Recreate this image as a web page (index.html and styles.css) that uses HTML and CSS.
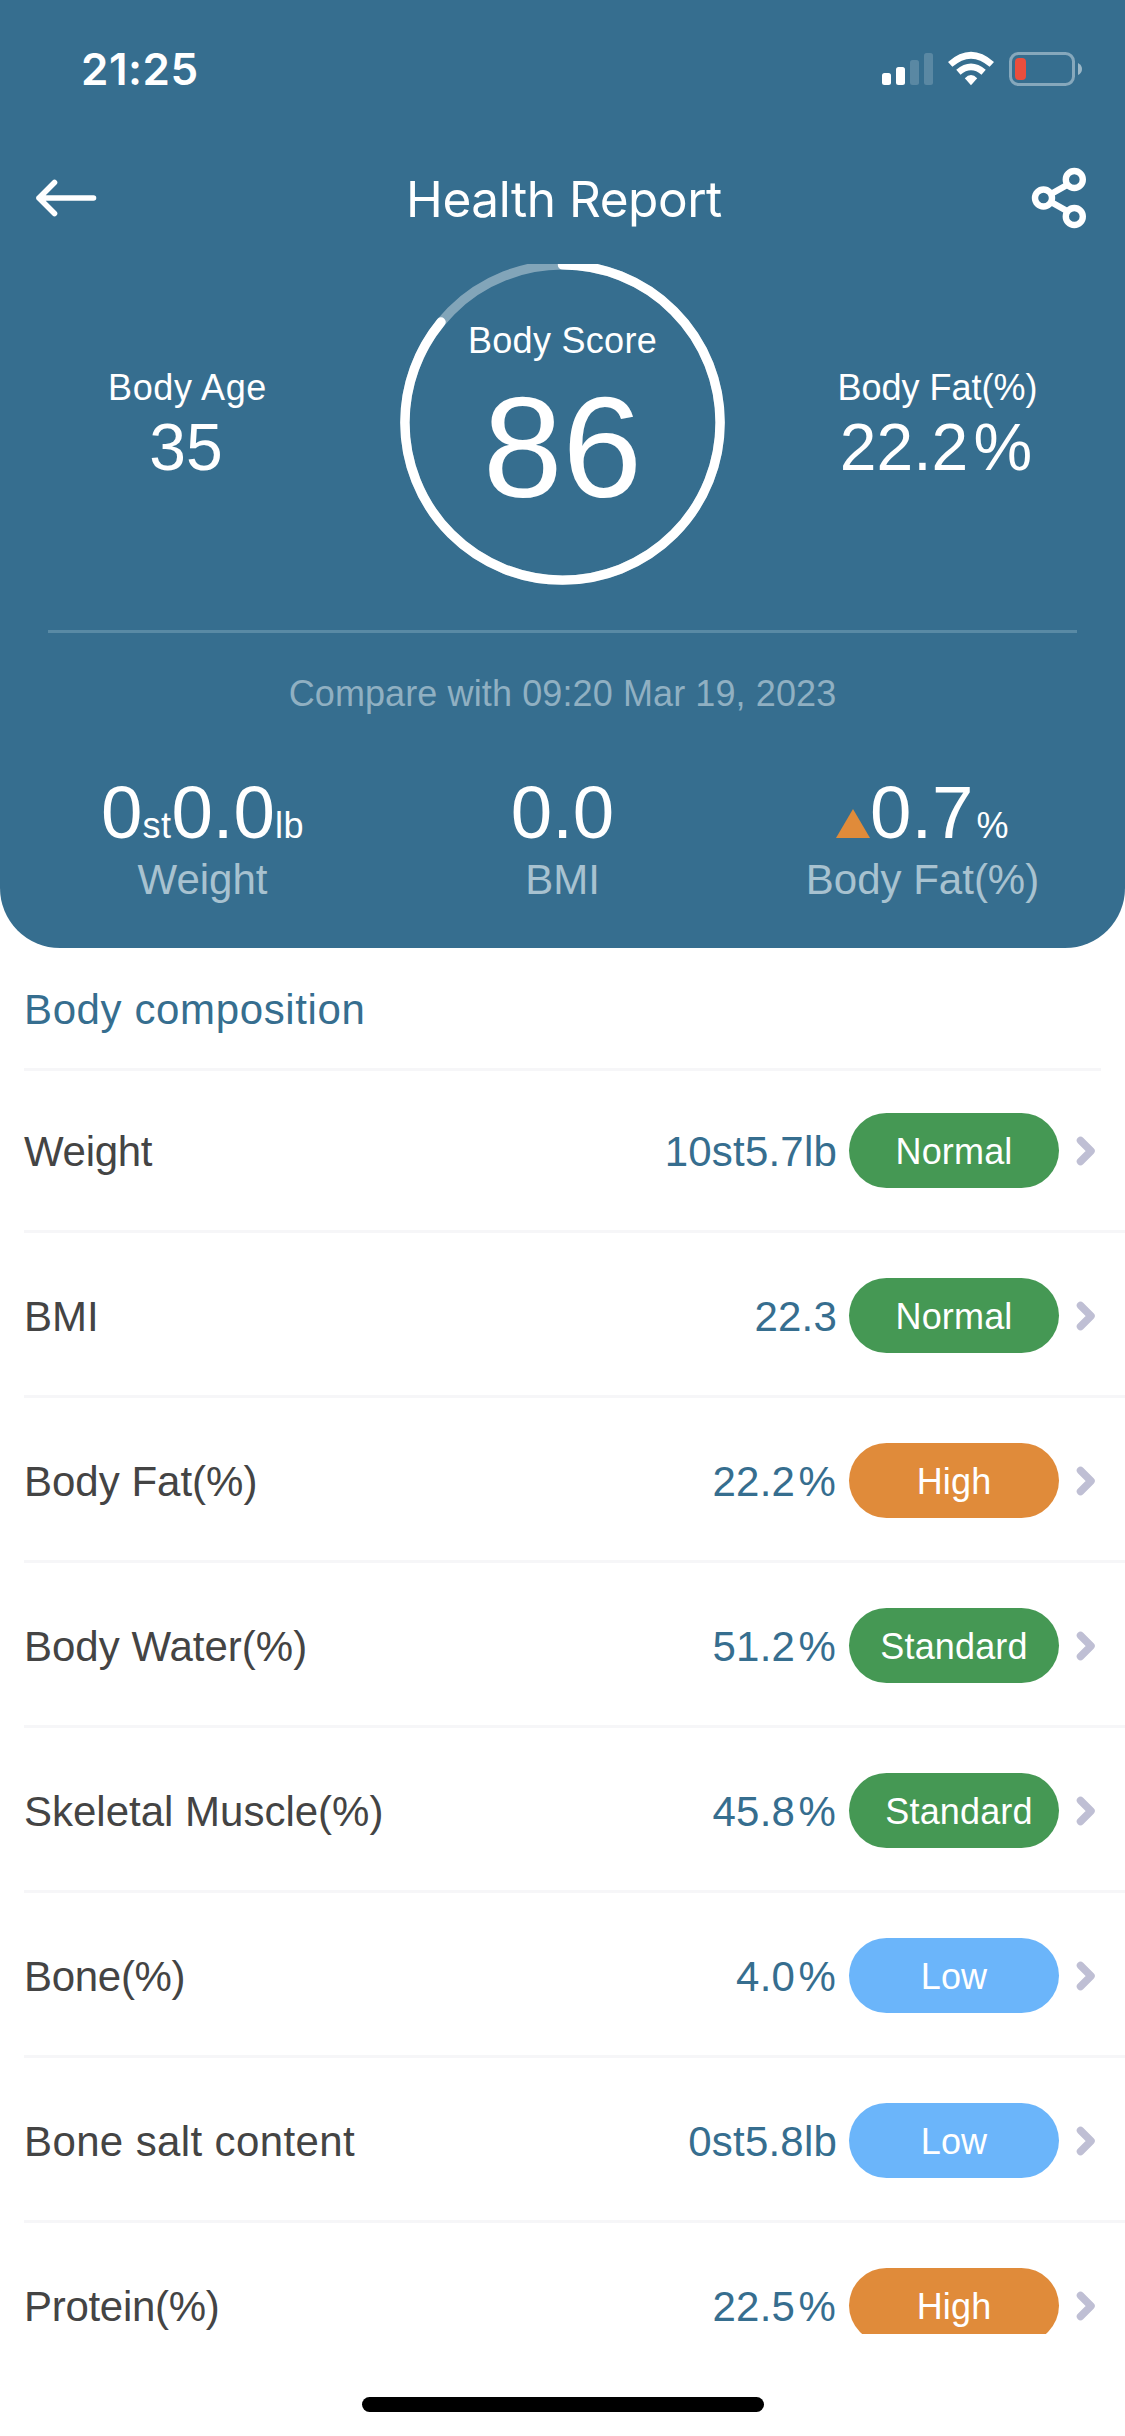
FILE: index.html
```html
<!DOCTYPE html>
<html lang="en">
<head>
<meta charset="utf-8">
<title>Health Report</title>
<link rel="stylesheet" href="styles.css">
</head>
<body>
<div class="screen">
  <header class="top">
    <div class="status">
      <span class="time">21:25</span>
      <svg class="status-icons" width="202" height="36" viewBox="881 51 202 36">
        <g fill="#fff">
          <rect x="882" y="73" width="9" height="12" rx="2.5"/>
          <rect x="896" y="67" width="9" height="18" rx="2.5"/>
          <rect x="910" y="60" width="9" height="25" rx="2.5" opacity=".18"/>
          <rect x="924" y="53" width="9" height="32" rx="2.5" opacity=".18"/>
        </g>
        <path d="M971 85.200L964.800 78.300Q971 71.800 977.200 78.300Z" fill="#fff"/>
        <g fill="none" stroke="#fff" stroke-width="6.600">
          <path d="M950.200 64.400Q971 46 991.800 64.400"/>
          <path d="M958.400 72.300Q971 61.500 983.600 72.300"/>
        </g>
        <rect x="1010.500" y="53.500" width="63" height="31" rx="8" fill="none" stroke="#fff" stroke-opacity=".4" stroke-width="3"/>
        <path d="M1078 63q4 2 4 6t-4 6z" fill="#fff" opacity=".5"/>
        <rect x="1015" y="58" width="11" height="22" rx="4" fill="#eb4e3d"/>
      </svg>
    </div>
    <nav class="nav">
      <svg width="62" height="40" viewBox="35 178 62 40" fill="none" stroke="#fff" stroke-width="5.600" stroke-linecap="round" stroke-linejoin="round">
        <path d="M39 198H93.500M54.500 182.500L39 198L54.500 213.500"/>
      </svg>
      <h1 class="title">Health Report</h1>
      <svg width="56" height="62" viewBox="1031 167 56 62" fill="none" stroke="#fff" stroke-width="6.400">
        <circle cx="1074.300" cy="179.500" r="8.500"/><circle cx="1043.500" cy="198" r="8.500"/><circle cx="1074.300" cy="216.500" r="8.500"/>
        <path d="M1051 194L1067 185M1051 202L1067 211"/>
      </svg>
    </nav>
    <section class="summary">
      <div class="metric"><span class="metric-name age">Body Age</span><span class="metric-value">35</span></div>
      <div class="score">
        <svg class="ring" width="325" height="325" viewBox="0 0 325 325" fill="none" stroke="#fff" stroke-width="9.400">
          <circle cx="162.500" cy="162.500" r="157.600" stroke-opacity=".38"/>
          <circle cx="162.500" cy="162.500" r="157.600" pathLength="100" stroke-dasharray="86 100" stroke-linecap="round" transform="rotate(-90 162.500 162.500)"/>
        </svg>
        <span class="score-name">Body Score</span>
        <span class="score-value">86</span>
      </div>
      <div class="metric"><span class="metric-name">Body Fat(%)</span><span class="metric-value">22.2<span class="sign">%</span></span></div>
    </section>
    <section class="compare">
      <p class="compare-title">Compare with 09:20 Mar 19, 2023</p>
      <div class="changes">
        <div class="change"><div class="change-value">0<small>st</small>0.0<small>lb</small></div><div class="change-name">Weight</div></div>
        <div class="change"><div class="change-value">0.0</div><div class="change-name">BMI</div></div>
        <div class="change"><div class="change-value"><svg class="up" width="34" height="29" viewBox="0 0 34 29"><path d="M17 0L34 29H0Z" fill="#e08b3a"/></svg>0.7<small class="percent">%</small></div><div class="change-name">Body Fat(%)</div></div>
      </div>
    </section>
  </header>
  <main class="list">
    <h2 class="heading">Body composition</h2>
    <div class="row first"><span class="name tight">Weight</span><span class="value">10st5.7lb</span><span class="pill green">Normal</span><svg class="chevron" width="20" height="30" viewBox="0 0 20 30"><path d="M4.500 4.500L15 15L4.500 25.500"/></svg></div>
    <div class="row"><span class="name">BMI</span><span class="value">22.3</span><span class="pill green">Normal</span><svg class="chevron" width="20" height="30" viewBox="0 0 20 30"><path d="M4.500 4.500L15 15L4.500 25.500"/></svg></div>
    <div class="row"><span class="name">Body Fat(%)</span><span class="value pct">22.2<span class="sign">%</span></span><span class="pill orange">High</span><svg class="chevron" width="20" height="30" viewBox="0 0 20 30"><path d="M4.500 4.500L15 15L4.500 25.500"/></svg></div>
    <div class="row"><span class="name">Body Water(%)</span><span class="value pct">51.2<span class="sign">%</span></span><span class="pill green">Standard</span><svg class="chevron" width="20" height="30" viewBox="0 0 20 30"><path d="M4.500 4.500L15 15L4.500 25.500"/></svg></div>
    <div class="row"><span class="name">Skeletal Muscle(%)</span><span class="value pct">45.8<span class="sign">%</span></span><span class="pill green shifted">Standard</span><svg class="chevron" width="20" height="30" viewBox="0 0 20 30"><path d="M4.500 4.500L15 15L4.500 25.500"/></svg></div>
    <div class="row"><span class="name tight">Bone(%)</span><span class="value pct">4.0<span class="sign">%</span></span><span class="pill blue">Low</span><svg class="chevron" width="20" height="30" viewBox="0 0 20 30"><path d="M4.500 4.500L15 15L4.500 25.500"/></svg></div>
    <div class="row"><span class="name wide">Bone salt content</span><span class="value">0st5.8lb</span><span class="pill blue">Low</span><svg class="chevron" width="20" height="30" viewBox="0 0 20 30"><path d="M4.500 4.500L15 15L4.500 25.500"/></svg></div>
    <div class="row"><span class="name tight">Protein(%)</span><span class="value pct">22.5<span class="sign">%</span></span><span class="pill orange">High</span><svg class="chevron" width="20" height="30" viewBox="0 0 20 30"><path d="M4.500 4.500L15 15L4.500 25.500"/></svg></div>
  </main>
  <footer class="bottom"><div class="home-bar"></div></footer>
</div>
</body>
</html>
```
FILE: styles.css
```css
* { box-sizing: border-box; margin: 0; padding: 0; }
body { font-family: "Liberation Sans", Arial, sans-serif; background: #fff; }
svg { display: block; flex: none; }
h1, h2 { font-weight: 400; }
.screen { width: 1125px; height: 2436px; overflow: hidden; display: flex; flex-direction: column; }

.top { height: 948px; flex: none; background: #366e8f; color: #fff; border-radius: 0 0 60px 60px; }
.status { height: 138px; display: flex; justify-content: space-between; align-items: center; padding: 0 42px 0 81px; }
.time { font: 600 44px/60px Inter, sans-serif; letter-spacing: 0.5px; }
.nav { height: 126px; display: flex; justify-content: space-between; align-items: center; padding: 0 38px 6px 35px; }
.title { padding-top: 2px; font: 400 49.500px/60px Inter, sans-serif; letter-spacing: -0.45px; }

.summary { height: 366px; display: grid; grid-template-columns: 375px 375px 375px; justify-items: center; overflow: hidden; }
.metric { padding-top: 101px; display: flex; flex-direction: column; align-items: center; gap: 6px; }
.metric-name, .score-name { font-size: 36px; line-height: 46px; }
.metric-name.age { letter-spacing: 0.6px; }
.score-name { letter-spacing: 0.3px; }
.metric-value { margin-left: -3px; font-size: 66px; line-height: 60px; }
.sign { margin-left: 0.08em; }
.score { position: relative; width: 325px; height: 325px; margin-top: -4px; padding-top: 58px; display: flex; flex-direction: column; align-items: center; gap: 9px; }
.ring { position: absolute; left: 0; top: 0; }
.score-value { font-size: 143px; line-height: 150px; }

.compare { margin: 0 48px; border-top: 3px solid #598aa5; }
.compare-title { margin-top: 37px; font-size: 36px; line-height: 48px; letter-spacing: 0.11px; text-align: center; color: #90b0c2; }
.changes { margin: 57px -25.500px 0; display: grid; grid-template-columns: repeat(3, 1fr); }
.change { display: flex; flex-direction: column; align-items: center; }
.change-value { display: flex; align-items: baseline; height: 78px; font-size: 74.500px; line-height: 76px; }
.change-value small { font-size: 36px; line-height: 40px; letter-spacing: 0.5px; }
.change-value .percent { margin-left: 3px; }
.change-name { font-size: 42px; line-height: 54px; color: #a8c2d0; }

.list { height: 1386px; flex: none; overflow: hidden; }
.heading { height: 120px; padding: 2px 24px 0; font-size: 42px; line-height: 120px; letter-spacing: 0.62px; color: #366e8f; }
.row { margin-left: 24px; height: 165px; border-top: 3px solid #f6f6f8; padding: 3px 32px 0 0; display: flex; align-items: center; font-size: 42px; }
.row.first { height: 162px; padding-top: 0; border-color: transparent; background: linear-gradient(#f6f6f8, #f6f6f8) 0 0 / 1077px 3px no-repeat border-box; }
.name { flex: 1; padding-top: 3px; color: #444; }
.name.tight { letter-spacing: -0.3px; }
.name.wide { letter-spacing: 0.38px; }
.value { padding-top: 3px; margin-right: 12px; letter-spacing: 0.2px; color: #366e8f; }
.value.pct { margin-right: 13px; }
.pill { width: 210px; height: 75px; border-radius: 37.500px; padding-top: 2px; font-size: 36px; line-height: 73px; letter-spacing: 0.15px; text-align: center; color: #fff; }
.shifted { padding-left: 10px; }
.green { background: #459854; }
.orange { background: #e08b3a; }
.blue { background: #6bb5fa; }
.chevron { margin-left: 17px; margin-right: -3px; }
.chevron path { fill: none; stroke: #bfbfd4; stroke-width: 7.500; stroke-linecap: round; stroke-linejoin: round; }

.bottom { flex: 1; display: flex; justify-content: center; padding-top: 63px; }
.home-bar { width: 402px; height: 15px; border-radius: 8px; background: #000; }
```
